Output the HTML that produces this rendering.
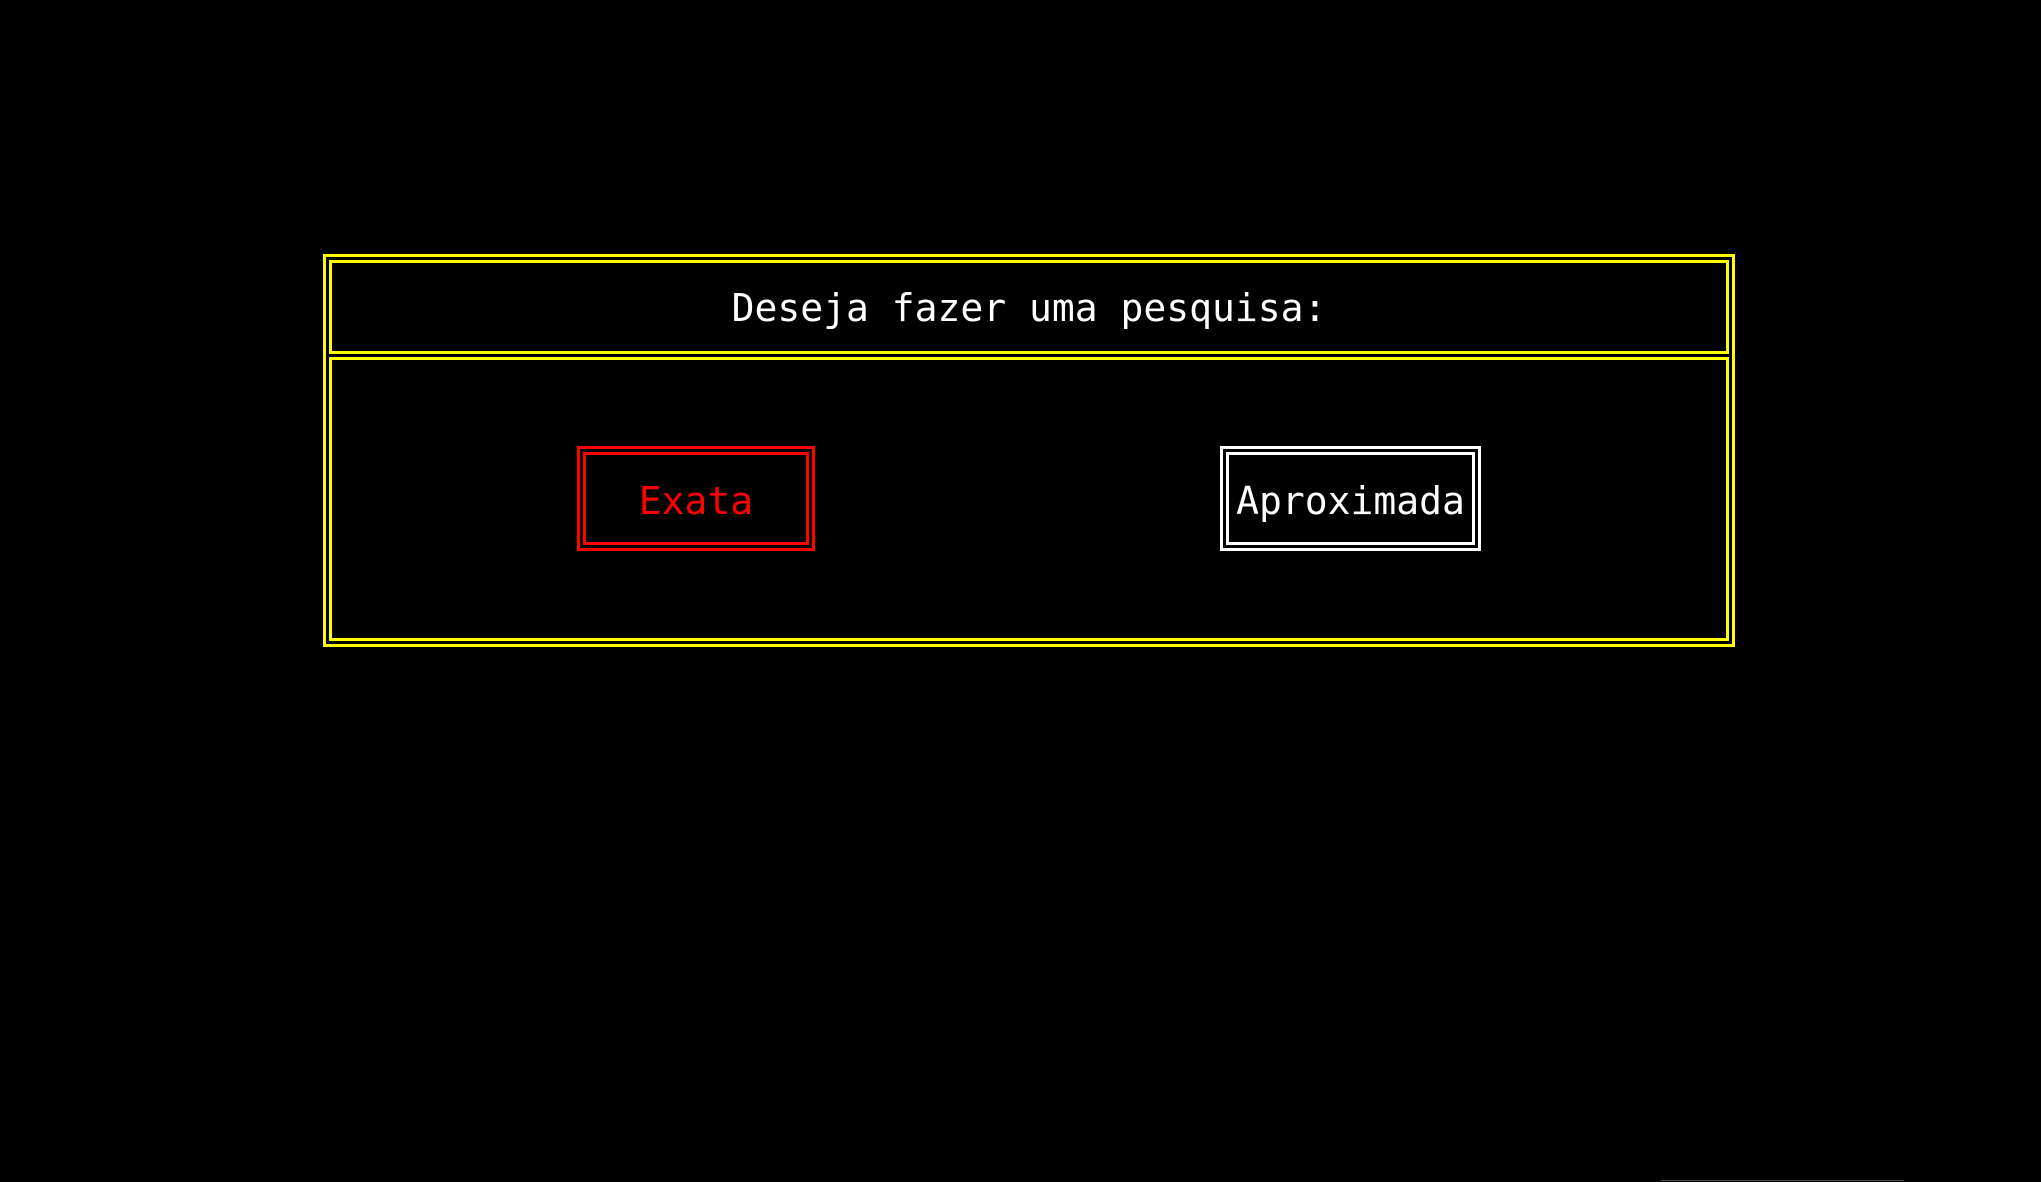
<!DOCTYPE html>
<html><head><meta charset="utf-8"><style>
html,body{margin:0;padding:0;background:#000;width:2041px;height:1182px;overflow:hidden;position:relative}
div{position:absolute;box-sizing:border-box}
.t{font-family:"DejaVu Sans Mono","Liberation Mono",monospace;font-size:38px;line-height:1;white-space:nowrap;text-align:center}
</style></head><body>
<div style="left:323px;top:254px;width:1412px;height:393px;border:3px solid #ff0"></div>
<div style="left:329px;top:260px;width:1400px;height:94px;border:3px solid #ff0"></div>
<div style="left:329px;top:357px;width:1400px;height:284px;border:3px solid #ff0"></div>
<div class="t" style="left:329px;top:289px;width:1400px;color:#fff">Deseja fazer uma pesquisa:</div>
<div style="left:577px;top:446px;width:238px;height:105px;border:9px double #f00"></div>
<div class="t" style="left:577px;top:482px;width:238px;color:#f00">Exata</div>
<div style="left:1220px;top:446px;width:261px;height:105px;border:9px double #fff"></div>
<div class="t" style="left:1220px;top:482px;width:261px;color:#fff">Aproximada</div>
<div style="left:1661px;top:1180px;width:243px;height:2px;border-top:1px solid #444"></div>
</body></html>
